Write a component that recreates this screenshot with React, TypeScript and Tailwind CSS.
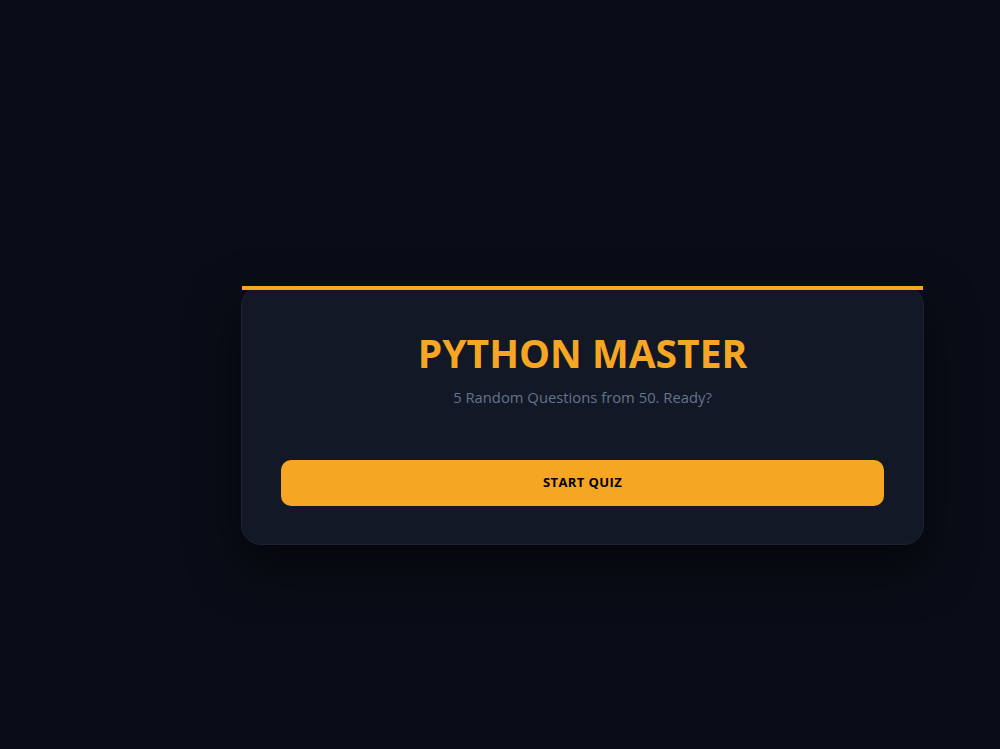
export default function App() {
  return (
    <div
      className="min-h-[749px] w-full bg-[#0a0d17] pl-[241px] pt-[286px]"
      style={{ fontFamily: '"Open Sans", "Noto Sans", sans-serif' }}
    >
      <div className="relative w-[683px] rounded-[20px] border border-[#1c2333] bg-[#121826] px-[39px] pb-[38px] pt-[42px] shadow-[0_20px_50px_rgba(0,0,0,0.55)]">
        {/* accent strip across the top edge */}
        <div className="absolute left-0 right-0 -top-px h-[4px] bg-[#f5a623]" />

        <h1 className="text-center text-[39px] font-bold leading-[48px] text-[#f5a623]">PYTHON MASTER</h1>
        <p className="mt-[9px] text-center text-[14.8px] leading-[22px] text-[#64748b]">
          5 Random Questions from 50. Ready?
        </p>

        <button
          type="button"
          className="mt-[52px] flex h-[46px] w-full items-center justify-center rounded-[10px] bg-[#f5a623] text-[13px] font-bold tracking-[0.4px] text-black"
        >
          START QUIZ
        </button>
      </div>
    </div>
  );
}
